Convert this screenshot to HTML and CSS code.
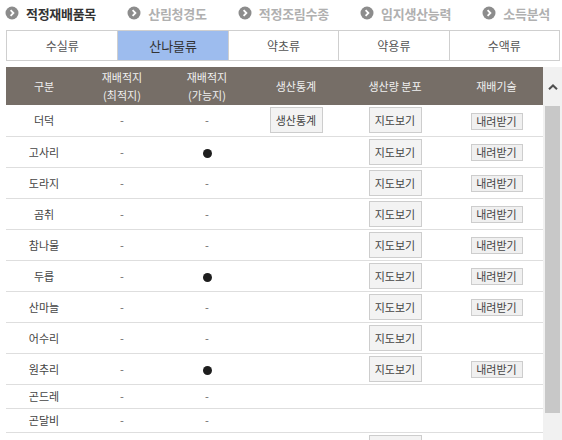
FILE: index.html
```html
<!DOCTYPE html>
<html>
<head>
  <title>산나물류 적정재배품목</title>
  <link rel="stylesheet" href="styles.css">
</head>
<body>

  <div class="nav">
    <a class="nav-item on"><svg class="bullet" viewBox="0 0 14 14"><circle cx="7" cy="7" r="6.5"/><path d="M5.6 4.2 8.4 7 5.6 9.8"/></svg>적정재배품목</a>
    <a class="nav-item"><svg class="bullet" viewBox="0 0 14 14"><circle cx="7" cy="7" r="6.5"/><path d="M5.6 4.2 8.4 7 5.6 9.8"/></svg>산림청경도</a>
    <a class="nav-item"><svg class="bullet" viewBox="0 0 14 14"><circle cx="7" cy="7" r="6.5"/><path d="M5.6 4.2 8.4 7 5.6 9.8"/></svg>적정조림수종</a>
    <a class="nav-item"><svg class="bullet" viewBox="0 0 14 14"><circle cx="7" cy="7" r="6.5"/><path d="M5.6 4.2 8.4 7 5.6 9.8"/></svg>임지생산능력</a>
    <a class="nav-item"><svg class="bullet" viewBox="0 0 14 14"><circle cx="7" cy="7" r="6.5"/><path d="M5.6 4.2 8.4 7 5.6 9.8"/></svg>소득분석</a>
  </div>

  <div class="tabs">
    <div class="tab">수실류</div>
    <div class="tab active">산나물류</div>
    <div class="tab">약초류</div>
    <div class="tab">약용류</div>
    <div class="tab">수액류</div>
  </div>

  <div class="board">
    <div class="list">
      <table>
        <thead>
          <tr>
            <th class="c1">구분</th>
            <th class="c2">재배적지<br>(최적지)</th>
            <th class="c3">재배적지<br>(가능지)</th>
            <th class="c4">생산통계</th>
            <th class="c5">생산량 분포</th>
            <th class="c6">재배기술</th>
          </tr>
        </thead>
        <tbody>
          <tr><td class="name">더덕</td><td>-</td><td>-</td><td><button class="btn">생산통계</button></td><td><button class="btn">지도보기</button></td><td><button class="btn small">내려받기</button></td></tr>
          <tr><td class="name">고사리</td><td>-</td><td><span class="dot"></span></td><td></td><td><button class="btn">지도보기</button></td><td><button class="btn small">내려받기</button></td></tr>
          <tr><td class="name">도라지</td><td>-</td><td>-</td><td></td><td><button class="btn">지도보기</button></td><td><button class="btn small">내려받기</button></td></tr>
          <tr><td class="name">곰취</td><td>-</td><td>-</td><td></td><td><button class="btn">지도보기</button></td><td><button class="btn small">내려받기</button></td></tr>
          <tr><td class="name">참나물</td><td>-</td><td>-</td><td></td><td><button class="btn">지도보기</button></td><td><button class="btn small">내려받기</button></td></tr>
          <tr><td class="name">두릅</td><td>-</td><td><span class="dot"></span></td><td></td><td><button class="btn">지도보기</button></td><td><button class="btn small">내려받기</button></td></tr>
          <tr><td class="name">산마늘</td><td>-</td><td>-</td><td></td><td><button class="btn">지도보기</button></td><td><button class="btn small">내려받기</button></td></tr>
          <tr><td class="name">어수리</td><td>-</td><td>-</td><td></td><td><button class="btn">지도보기</button></td><td></td></tr>
          <tr><td class="name">원추리</td><td>-</td><td><span class="dot"></span></td><td></td><td><button class="btn">지도보기</button></td><td><button class="btn small">내려받기</button></td></tr>
          <tr class="short"><td class="name">곤드레</td><td>-</td><td>-</td><td></td><td></td><td></td></tr>
          <tr class="short"><td class="name">곤달비</td><td>-</td><td>-</td><td></td><td></td><td></td></tr>
          <tr><td></td><td></td><td></td><td></td><td><button class="btn"></button></td><td></td></tr>
        </tbody>
      </table>
    </div>

    <div class="scrollbar">
      <div class="arrow">
        <svg viewBox="0 0 10 6"><path d="M1 5.2 5 1.4 9 5.2"/></svg>
      </div>
      <div class="thumb"></div>
    </div>
  </div>

</body>
</html>
```

FILE: styles.css
```css
* { box-sizing: border-box; margin: 0; padding: 0; }

body {
  font-family: "Noto Sans CJK KR", "Noto Sans", sans-serif;
  font-size: 11px;
  color: #333;
  background: #fff;
  width: 562px;
  height: 440px;
  overflow: hidden;
}

/* top step menu */
.nav {
  display: flex;
  justify-content: space-between;
  align-items: center;
  height: 26px;
  padding: 0 12px 0 5px;
}

.nav-item {
  display: flex;
  align-items: center;
  gap: 7px;
  font-size: 13px;
  font-weight: bold;
  color: #b0b0b0;
  letter-spacing: -0.3px;
}

.nav-item.on {
  color: #333;
}

.bullet {
  width: 14px;
  height: 14px;
}

.bullet circle {
  fill: #8c8c8c;
}

.bullet path {
  fill: none;
  stroke: #fff;
  stroke-width: 1.8;
}

/* category tabs */
.tabs {
  display: grid;
  grid-template-columns: repeat(5, 1fr);
  height: 31px;
  margin: 4px 2px 0 6px;
  border: 1px solid #cfcfcf;
}

.tab {
  display: flex;
  align-items: center;
  justify-content: center;
  font-size: 12px;
  color: #555;
  border-left: 1px solid #cfcfcf;
}

.tab:first-child {
  border-left: none;
}

.tab.active {
  background: #9dbcee;
  color: #333;
  font-size: 13px;
}

/* table + scrollbar */
.board {
  display: flex;
  height: 373px;
  margin: 6px 0 0 6px;
}

.list {
  width: 537px;
  overflow: hidden;
}

table {
  width: 537px;
  border-collapse: collapse;
  table-layout: fixed;
}

th {
  height: 38px;
  background: #766e67;
  color: #f0f0f0;
  font-weight: normal;
  line-height: 18px;
  text-align: center;
  padding: 0;
}

.c1 { width: 76px; }
.c2 { width: 80px; }
.c3 { width: 90px; }
.c4 { width: 88px; }
.c5 { width: 110px; }
.c6 { width: 93px; }

td {
  height: 31px;
  text-align: center;
  border-bottom: 1px solid #dedede;
  color: #666;
  padding: 0;
  line-height: 16px;
}

tr.short td {
  height: 24px;
}

td.name {
  color: #444;
}

.dot {
  display: inline-block;
  width: 9px;
  height: 9px;
  border-radius: 50%;
  background: #1e1e1e;
  vertical-align: middle;
}

.btn {
  font-family: inherit;
  font-size: 11px;
  color: #444;
  background: #f3f3f3;
  border: 1px solid #cdcdcd;
  width: 53px;
  height: 26px;
  line-height: 24px;
  vertical-align: middle;
}

.btn.small {
  width: 52px;
  height: 17px;
  line-height: 15px;
  background: #f0f0f0;
}

.scrollbar {
  width: 19px;
  background: #f1f1f1;
  display: flex;
  flex-direction: column;
  align-items: center;
}

.arrow {
  height: 39px;
  display: flex;
  align-items: center;
  justify-content: center;
}

.arrow svg {
  width: 10px;
  height: 6px;
}

.arrow path {
  fill: none;
  stroke: #505050;
  stroke-width: 2;
}

.thumb {
  width: 15px;
  height: 307px;
  background: #c8c8c8;
}
```
